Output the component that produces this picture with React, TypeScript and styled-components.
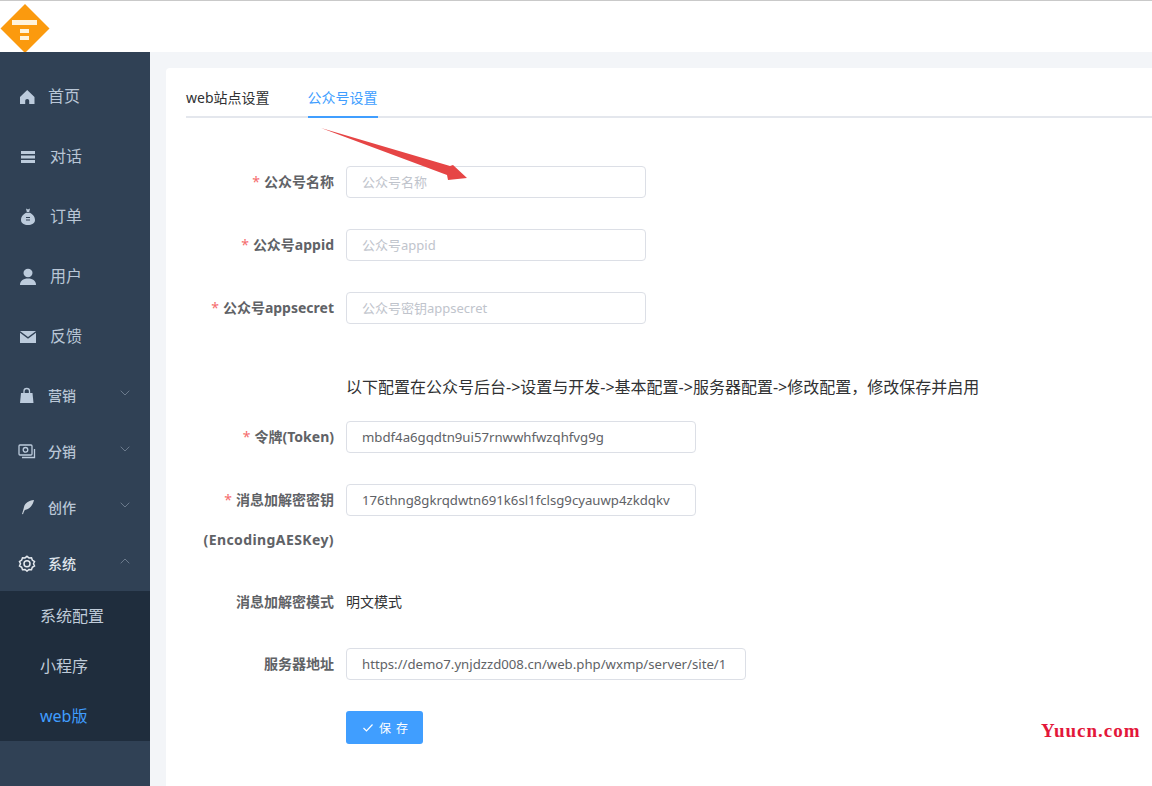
import React from "react";
import styled, { createGlobalStyle } from "styled-components";

const Global = createGlobalStyle`
  html, body { margin: 0; padding: 0; width: 100%; height: 786px; overflow: hidden; background: #f3f5f8; }
  * { box-sizing: border-box; }
  body { font-family: "Noto Sans", "Noto Sans CJK SC", sans-serif; }
`;
const Page = styled.div`
  position: relative; width: 1152px; height: 786px; overflow: hidden;
  display: flex; flex-direction: column;
`;
const Header = styled.header`
  flex: 0 0 52px; height: 52px; min-height: 0; background: #fff; border-top: 1px solid #c9c9c9;
  display: flex; align-items: flex-start;
`;
const Logo = styled.svg`width: 50px; height: 50px; display: block; margin-top: 2px; flex: none;`;
const Body = styled.div`flex: 1; display: flex; min-height: 0;`;
const Side = styled.nav`
  flex: 0 0 150px; background: #304155; padding-top: 14px; display: flex; flex-direction: column;
`;
const TopGroup = styled.div`display: flex; flex-direction: column; margin-bottom: 1px;`;
const TopItem = styled.div<{ $gap?: number }>`
  height: 60px; display: flex; align-items: center; padding-left: 18px; color: #b9c6d6; font-size: 16px;
  span { margin-left: ${p => p.$gap ?? 14}px; line-height: 20px; margin-top: -1px; }
`;
const FoldItem = styled.div<{ $light?: boolean }>`
  height: 56px; display: flex; align-items: center; padding-left: 18px; padding-right: 20px;
  color: ${p => (p.$light ? "#dfe5ec" : "#b9c6d6")}; font-size: 14px;
  span { margin-left: 12px; flex: 1; font-weight: 500; }
`;
const IconBox = styled.svg`width: 18px; height: 18px; flex: none; display: block;`;
const Chevron = styled.svg`width: 10px; height: 6px; flex: none; margin-top: -4px;`;
const Sub = styled.div`background: #1f2d3d; display: flex; flex-direction: column;`;
const SubItem = styled.div<{ $active?: boolean }>`
  height: 50px; display: flex; align-items: center; padding: 0 0 3px 40px; font-size: 16px;
  color: ${p => (p.$active ? "#409eff" : "#bfcbd9")};
`;
const Main = styled.main`flex: 1; padding: 16px 0 0 16px; min-width: 0;`;
const Card = styled.section`
  background: #fff; height: 100%; border-radius: 4px 0 0 0; padding: 14px 0 0 20px;
`;
const Tabs = styled.div`
  display: flex; gap: 38px; border-bottom: 2px solid #e4e7ed; height: 36px; margin-bottom: 48px;
`;
const Tab = styled.div<{ $active?: boolean }>`
  height: 36px; line-height: 31px; font-size: 14px; color: ${p => (p.$active ? "#409eff" : "#303133")};
  border-bottom: 2px solid ${p => (p.$active ? "#409eff" : "transparent")};
`;
const Form = styled.form`display: flex; flex-direction: column;`;
const Row = styled.div<{ $mb?: number }>`
  display: grid; grid-template-columns: 148px 1fr; column-gap: 12px; align-items: start;
  margin-bottom: ${p => p.$mb ?? 31}px;
`;
const Label = styled.label`
  text-align: right; font-size: 14px; font-weight: 700; color: #606266; line-height: 32px;
  white-space: nowrap;
  i { color: #f56c6c; font-style: normal; font-weight: 400; margin-right: 4px; }
`;
const TallLabel = styled(Label)`
  line-height: 40px; margin-top: -4px;
  b { letter-spacing: .4px; font-weight: 700; }
`;
const Input = styled.div<{ $w: number; $ph?: boolean }>`
  width: ${p => p.$w}px; height: 32px; border: 1px solid #dcdfe6; border-radius: 4px; padding: 0 15px;
  font-size: ${p => (p.$ph ? 13 : 13.2)}px; line-height: 30px; white-space: nowrap; overflow: hidden;
  color: ${p => (p.$ph ? "#c0c4cc" : "#606266")};
`;
const Note = styled.div`
  margin-left: 160px; font-size: 16px; line-height: 22px; color: #303133; margin-bottom: 23px;
`;
const Plain = styled.div`font-size: 14px; line-height: 32px; color: #303133;`;
const SaveBtn = styled.button`
  width: 77px; height: 33px; border: none; border-radius: 3px; background: #409eff; color: #fff;
  font: 12px "Noto Sans", "Noto Sans CJK SC", sans-serif; letter-spacing: 5px; padding: 0 0 0 16px;
  display: flex; align-items: center; justify-content: flex-start; gap: 5px;
`;
const Arrow = styled.svg`position: absolute; left: 320px; top: 127px; width: 150px; height: 55px; pointer-events: none;`;
const Mark = styled.div`
  position: absolute; left: 1041px; top: 720px; color: #e3173a; font: 700 19px "Liberation Serif", serif; letter-spacing: 1px;
`;

const c = "#bccbdc";
const Home = () => <IconBox viewBox="0 0 18 18"><path fill={c} d="M9.200 3 2 10v7h5.200v-3c0-1.200.8-2 2-2s2 .8 2 2v3h5.300v-7z" /></IconBox>;
const Menu = () => <IconBox viewBox="0 0 18 18"><path fill={c} d="M3 4h14v3H3zM3 8.500h14v3H3zM3 13h14v3H3z" /></IconBox>;
const Bag = () => <IconBox viewBox="0 0 18 18"><path fill={c} d="M8 1.500l2 1 2-1-.8 3.500H8.800zM8.200 5.800h3.600c2.700 1.500 5.200 3.700 5.200 7.200 0 3.500-3.300 5-7 5s-7-1.500-7-5c0-3.500 2.500-5.700 5.200-7.200z" /><path fill="#304155" d="M8 10h4v1H8zM8 12.500h4v1H8z" /></IconBox>;
const User = () => <IconBox viewBox="0 0 18 18"><ellipse fill={c} cx="10" cy="6" rx="4.500" ry="4.200" /><path fill={c} d="M2 18c0-4 3-6.500 8-6.500s8 2.500 8 6.500z" /></IconBox>;
const Mail = () => <IconBox viewBox="0 0 18 18"><path fill={c} d="M2 4h16L10 10zM2 5.800l8 6 8-6V16H2z" /></IconBox>;
const Shop = () => <IconBox viewBox="0 0 18 18"><path fill={c} d="M3 7h11.500l1 10H2z" /><path fill="none" stroke={c} strokeWidth="1.300" d="M6 9V5C6 3.300 7.300 2.500 8.800 2.500S11.500 3.300 11.500 5v4" /></IconBox>;
const Photo = () => <IconBox viewBox="0 0 18 18"><g fill="none" stroke={c} strokeWidth="1.300"><rect x="1" y="3" width="13" height="10" rx="1" /><circle cx="7.500" cy="7.800" r="2.300" /><path d="M4 15.500h12.500V7" /></g></IconBox>;
const Feather = () => <IconBox viewBox="0 0 18 18"><path fill="#c9d2dc" d="M16 2C10.500 2.500 7 5 6 9c-.5 2-1 4-2 7l1 .3c.5-1.700 1-3 1.800-4.300C12 11 15 7 16 2z" /></IconBox>;
const Gear = () => <IconBox viewBox="0 0 18 18"><g fill="none" stroke="#e4e9ef" strokeWidth="1.500"><path d="M9 2.300l2 1.600 2.500-.2.800 2.400 2.200 1.400-1 2.200 1 2.200-2.200 1.400-.8 2.400-2.500-.2-2 1.600-2-1.600-2.500.2-.8-2.400-2.200-1.400 1-2.200-1-2.200 2.200-1.400.8-2.400 2.500.2z" /><circle cx="9" cy="9.700" r="3" /></g></IconBox>;
const Down = () => <Chevron viewBox="0 0 10 6"><path fill="none" stroke="#6b7a8c" strokeWidth="1" d="M.7.700 5 5l4.300-4.300" /></Chevron>;
const Up = () => <Chevron viewBox="0 0 10 6"><path fill="none" stroke="#6b7a8c" strokeWidth="1" d="M.7 5.300 5 1l4.300 4.300" /></Chevron>;

export default function App() {
  return (
    <Page>
      <Global />
      <Header>
        <Logo viewBox="0 0 50 50">
          <path fill="#fb9a0e" d="M25 1 49.500 25.500 25 50 .5 25.500z" />
          <path fill="#fff3dc" d="M12 17h25v5H12zM20 26h9v4h-9zM20 33h9v4h-9z" />
        </Logo>
      </Header>
      <Body>
        <Side>
          <TopGroup>
            <TopItem $gap={12}><Home /><span>首页</span></TopItem>
            <TopItem><Menu /><span>对话</span></TopItem>
            <TopItem><Bag /><span>订单</span></TopItem>
            <TopItem><User /><span>用户</span></TopItem>
            <TopItem><Mail /><span>反馈</span></TopItem>
          </TopGroup>
          <FoldItem><Shop /><span>营销</span><Down /></FoldItem>
          <FoldItem><Photo /><span>分销</span><Down /></FoldItem>
          <FoldItem><Feather /><span>创作</span><Down /></FoldItem>
          <FoldItem $light><Gear /><span>系统</span><Up /></FoldItem>
          <Sub>
            <SubItem>系统配置</SubItem>
            <SubItem>小程序</SubItem>
            <SubItem $active>web版</SubItem>
          </Sub>
        </Side>
        <Main>
          <Card>
            <Tabs>
              <Tab>web站点设置</Tab>
              <Tab $active>公众号设置</Tab>
            </Tabs>
            <Form>
              <Row><Label><i>*</i>公众号名称</Label><Input $w={300} $ph>公众号名称</Input></Row>
              <Row><Label><i>*</i>公众号appid</Label><Input $w={300} $ph>公众号appid</Input></Row>
              <Row $mb={52}><Label><i>*</i>公众号appsecret</Label><Input $w={300} $ph>公众号密钥appsecret</Input></Row>
              <Note>以下配置在公众号后台-&gt;设置与开发-&gt;基本配置-&gt;服务器配置-&gt;修改配置，修改保存并启用</Note>
              <Row><Label><i>*</i>令牌(Token)</Label><Input $w={350}>mbdf4a6gqdtn9ui57rnwwhfwzqhfvg9g</Input></Row>
              <Row $mb={26}><TallLabel><i>*</i>消息加解密密钥<br /><b>(EncodingAESKey)</b></TallLabel><Input $w={350}>176thng8gkrqdwtn691k6sl1fclsg9cyauwp4zkdqkv</Input></Row>
              <Row $mb={30}><Label>消息加解密模式</Label><Plain>明文模式</Plain></Row>
              <Row><Label>服务器地址</Label><Input $w={400}>https://demo7.ynjdzzd008.cn/web.php/wxmp/server/site/1</Input></Row>
              <Row>
                <span />
                <SaveBtn type="button">
                  <svg width="12" height="10" viewBox="0 0 12 10"><path fill="none" stroke="#fff" strokeWidth="1.200" d="M1.500 5 4.500 8 10.500 1.500" /></svg>
                  保存
                </SaveBtn>
              </Row>
            </Form>
          </Card>
        </Main>
      </Body>
      <Arrow viewBox="0 0 150 55">
        <path fill="#e64545" d="M1 1 130 39l3-1 14 13-19 2-1-5z" />
      </Arrow>
      <Mark>Yuucn.com</Mark>
    </Page>
  );
}
